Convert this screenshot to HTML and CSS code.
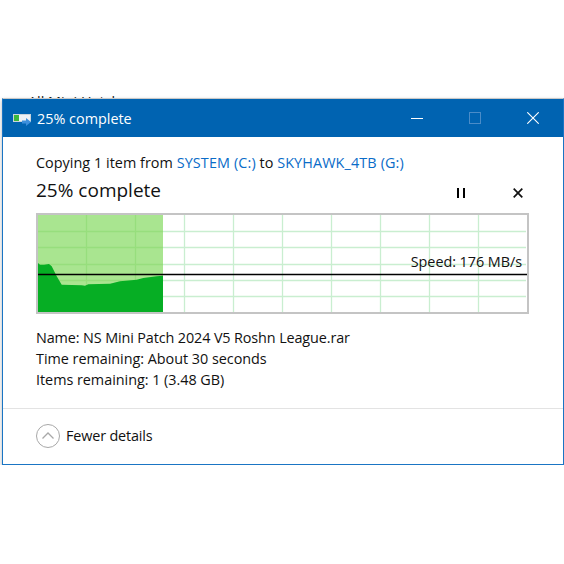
FILE: index.html
```html
<!DOCTYPE html>
<html lang="en">
<head>
    <meta charset="UTF-8">
    <title>25% complete</title>
    <link rel="stylesheet" href="styles.css">
</head>
<body>
<div class="behind">All Mini Hatch</div>

<div class="window">
    <!-- Title bar -->
    <div class="titlebar">
        <svg class="title-icon" width="20" height="14" viewBox="0 0 20 14">
            <rect x="0" y="2" width="18" height="8" fill="#c9d4dc"/>
            <rect x="6" y="3" width="11" height="6" fill="#eef2f5"/>
            <rect x="1" y="3" width="5" height="6" fill="#3cb83c"/>
            <path d="M9 8.500h4V6l5 4-5 4v-2.500H9z" fill="#3d8fdc"/>
        </svg>
        <span class="title-text">25% complete</span>
        <div class="win-btns">
            <svg width="12" height="12" viewBox="0 0 12 12"><path d="M0 6.500h12" stroke="#fff" stroke-width="1"/></svg>
            <svg width="12" height="12" viewBox="0 0 12 12"><rect x=".5" y=".5" width="11" height="11" fill="none" stroke="#4a8cc8"/></svg>
            <svg width="12" height="12" viewBox="0 0 12 12"><path d="M.3.300l11.400 11.400M11.700.300L.3 11.700" stroke="#fff" stroke-width="1.100"/></svg>
        </div>
    </div>

    <div class="content">
        <p class="copying">Copying 1 item from <a>SYSTEM (C:)</a> to <a>SKYHAWK_4TB (G:)</a></p>
        <div class="progress-head">
            <h1>25% complete</h1>
            <svg class="pause" width="10" height="10" viewBox="0 0 10 10"><path d="M1 0h2v10H1zM7 0h2v10H7z" fill="#000"/></svg>
            <svg class="stop" width="10" height="10" viewBox="0 0 10 10"><path d="M.7.700l8.600 8.600M9.300.700L.7 9.300" stroke="#111" stroke-width="1.700"/></svg>
        </div>

        <!-- Speed graph -->
        <div class="chart">
            <svg width="489" height="97" viewBox="0 0 489 97">
                <g stroke="#c9eed0" stroke-width="1.300">
                    <path d="M48.500 0v97M97.500 0v97M146.500 0v97M195.500 0v97M244.500 0v97M293.500 0v97M342.500 0v97M391.500 0v97M440.500 0v97"/>
                    <path d="M0 16.500h488M0 32.500h488M0 49.500h488M0 65.500h488M0 81.500h488"/>
                </g>
                <rect x="0" y="0" width="125" height="97" fill="#a9e590"/>
                <g stroke="#97de7d" stroke-width="1.300">
                    <path d="M48.500 0v97M97.500 0v97"/>
                    <path d="M0 16.500h125M0 32.500h125M0 49.500h125M0 65.500h125M0 81.500h125"/>
                </g>
                <path d="M0 97V48L2 49.700H6L11 49L13.700 51.300L18.700 61.300L23.700 69.700L43.700 70.300L47 70.700L50.300 69.300L72 68.700L82 66.300L98.700 64.700L105.300 63L118.700 61.300L125 60.700V97z" fill="#06ae24"/>
                <path d="M0 59.500h489" stroke="#000" stroke-width="1.300"/>
            </svg>
            <span class="speed">Speed: 176 MB/s</span>
        </div>

        <div class="details">
            <div class="name-row">Name: NS Mini Patch 2024 V5 Roshn League.rar</div>
            <div>Time remaining: About 30 seconds</div>
            <div>Items remaining: 1 (3.48 GB)</div>
        </div>
    </div>

    <div class="footer">
        <svg width="24" height="24" viewBox="0 0 24 24">
            <circle cx="12" cy="12" r="11.500" fill="#fff" stroke="#a8a8a8"/>
            <path d="M6.500 14.500L12 9l5.500 5.500" fill="none" stroke="#a8a8a8" stroke-width="1.300"/>
        </svg>
        <span>Fewer details</span>
    </div>
</div>
</body>
</html>
```
FILE: styles.css
```css
* { box-sizing: border-box; }
body {
  margin: 0;
  background: #fff;
  font-family: "Open Sans", "Noto Sans", sans-serif;
  color: #111;
  overflow: hidden;
}
/* sliver of the window behind the dialog */
.behind {
  height: 98px;
  overflow: hidden;
  padding: 92px 0 0 28px;
  font-size: 14.4px;
  line-height: 20px;
  color: #222;
}
.window {
  position: relative;
  width: 562px;
  height: 367px;
  margin-left: 2px;
  background: #fff;
  border: 1px solid #1a75c4;
  border-top-color: #c8c8c8;
  box-shadow: 0 2px 4px rgba(0,0,0,0.3);
}
.titlebar {
  height: 38px;
  background: #0063b1;
  color: #fff;
  display: flex;
  align-items: center;
  padding-left: 10px;
}
.title-text {
  margin-left: 4px;
  font-size: 14.4px;
}
.title-icon { margin-top: 1px; }
.win-btns {
  margin-left: auto;
  display: flex;
  gap: 46px;
  padding-right: 24px;
}
.content { padding: 0 33px; }
.copying {
  margin: 0;
  padding-top: 16px;
  font-size: 14.4px;
  line-height: 20px;
  letter-spacing: 0.03px;
}
.copying a {
  color: #0a6cc8;
  letter-spacing: 0.12px;
}
.progress-head {
  display: flex;
  align-items: center;
  margin-top: 6px;
  height: 28px;
}
.progress-head h1 {
  margin: 0;
  padding-bottom: 6px;
  font-size: 19px;
  font-weight: 400;
  flex: 1;
}
.pause { margin-right: 47px; }
.stop { margin-right: 7px; }
.chart {
  position: relative;
  width: 493px;
  height: 101px;
  margin-top: 6px;
  border: 2px solid #c4c4c4;
  overflow: hidden;
}
.chart svg { display: block; }
.speed {
  position: absolute;
  right: 5px;
  top: 37px;
  font-size: 14.4px;
  line-height: 20px;
  letter-spacing: -0.05px;
}
.details {
  margin-top: 13px;
  font-size: 14.4px;
  line-height: 21px;
  letter-spacing: -0.03px;
}
.name-row { letter-spacing: -0.12px; }
.footer {
  position: absolute;
  left: 0;
  right: 0;
  bottom: 0;
  height: 56px;
  border-top: 1px solid #e3e3e3;
  display: flex;
  align-items: center;
  gap: 6px;
  padding: 0 0 2px 33px;
  font-size: 14.4px;
  letter-spacing: -0.15px;
}
```
